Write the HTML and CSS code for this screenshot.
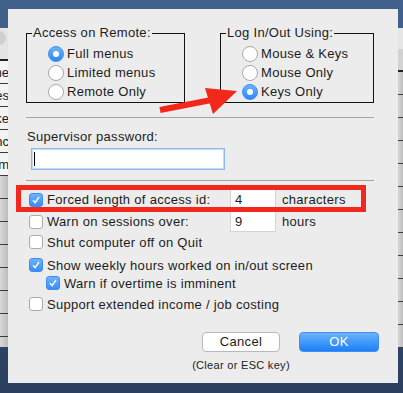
FILE: index.html
```html
<!DOCTYPE html>
<html lang="en">
<head>
  <meta charset="UTF-8" />
  <title>Preferences</title>
  <link rel="stylesheet" href="styles.css">
</head>
<body>
  <div class="desk">
    <div class="backwin left">
      <div class="bw-head"><span class="bw-btn"></span></div>
      <div class="bw-rows">
        <div class="bw-row txt"><span>Name</span></div>
        <div class="bw-row txt"><span>Jones</span></div>
        <div class="bw-row txt"><span>Mike</span></div>
        <div class="bw-row txt"><span>Lync</span></div>
        <div class="bw-row txt"><span>Kim</span></div>
        <div class="bw-row"></div>
        <div class="bw-row"></div>
        <div class="bw-row"></div>
        <div class="bw-row"></div>
        <div class="bw-row"></div>
        <div class="bw-row"></div>
        <div class="bw-row"></div>
        <div class="bw-row"></div>
      </div>
    </div>

    <div class="dialog">
      <div class="groups">
        <fieldset class="group access">
          <legend>Access on Remote:</legend>
          <div class="opt"><span class="radio on"></span>Full menus</div>
          <div class="opt"><span class="radio"></span>Limited menus</div>
          <div class="opt"><span class="radio"></span>Remote Only</div>
        </fieldset>
        <fieldset class="group login">
          <legend>Log In/Out Using:</legend>
          <div class="opt"><span class="radio"></span>Mouse &amp; Keys</div>
          <div class="opt"><span class="radio"></span>Mouse Only</div>
          <div class="opt"><span class="radio on"></span>Keys Only</div>
        </fieldset>
      </div>

      <hr class="sep first">

      <div class="pw-label">Supervisor password:</div>
      <div class="pw-field"><span class="caret"></span></div>

      <hr class="sep second">

      <div class="row r1">
        <span class="check on"><svg viewBox="0 0 14 14"><path d="M3.5 7.2 L6 10 L10.5 3.5" /></svg></span>
        <span class="lbl">Forced length of access id:</span>
        <span class="num">4</span>
        <span class="unit">characters</span>
      </div>
      <div class="row r2">
        <span class="check"></span>
        <span class="lbl">Warn on sessions over:</span>
        <span class="num">9</span>
        <span class="unit">hours</span>
      </div>
      <div class="row r3">
        <span class="check"></span>
        <span>Shut computer off on Quit</span>
      </div>
      <div class="row r4">
        <span class="check on"><svg viewBox="0 0 14 14"><path d="M3.5 7.2 L6 10 L10.5 3.5" /></svg></span>
        <span>Show weekly hours worked on in/out screen</span>
      </div>
      <div class="row r5 sub">
        <span class="check on"><svg viewBox="0 0 14 14"><path d="M3.5 7.2 L6 10 L10.5 3.5" /></svg></span>
        <span>Warn if overtime is imminent</span>
      </div>
      <div class="row r6">
        <span class="check"></span>
        <span>Support extended income / job costing</span>
      </div>

      <div class="buttons">
        <div class="btn-col">
          <div class="btn cancel">Cancel</div>
          <div class="hint">(Clear or ESC key)</div>
        </div>
        <div class="btn ok">OK</div>
      </div>
    </div>

    <div class="backwin right">
      <div class="bw-head"></div>
      <div class="bw-rows">
        <div class="bw-row"></div>
        <div class="bw-row"></div>
        <div class="bw-row"></div>
        <div class="bw-row"></div>
        <div class="bw-row"></div>
        <div class="bw-row"></div>
        <div class="bw-row"></div>
        <div class="bw-row"></div>
        <div class="bw-row"></div>
        <div class="bw-row"></div>
        <div class="bw-row"></div>
        <div class="bw-row"></div>
      </div>
    </div>
  </div>

  <!-- annotations drawn over the screenshot -->
  <svg class="marks" viewBox="0 0 403 393">
    <line x1="160" y1="110" x2="214" y2="99.5" />
    <polygon points="205,88 237,91 213,114" />
    <rect x="18.5" y="187.5" width="345" height="22" />
  </svg>
</body>
</html>
```

FILE: styles.css
```css
* { box-sizing: border-box; }
body {
  margin: 0;
  height: 393px;
  overflow: hidden;
  font-family: "Liberation Sans", Arial, sans-serif;
  font-size: 13px;
  letter-spacing: 0.3px;
  color: #1c1c1c;
  background: linear-gradient(180deg, #41618c 0%, #37547e 55%, #2b3f5e 100%);
  position: relative;
}
.desk {
  display: flex;
  align-items: flex-start;
  padding-top: 9px;
}

/* windows peeking out behind the sheet */
.backwin {
  margin-top: 19px;
  background: #c9c9c9;
  overflow: hidden;
}
.backwin.left { width: 8px; height: 319px; }
.backwin.right { width: 5px; height: 320px; }
.backwin .bw-head {
  background: #e4e4e4;
  border-bottom: 2px solid #222;
}
.backwin.left .bw-head { height: 33px; padding: 3px 0 0 0; }
.backwin.right .bw-head {
  height: 44px;
  background: linear-gradient(180deg, #e6e6e6 0, #e6e6e6 21px, #d2d2d2 21px);
}
.bw-btn {
  display: block;
  width: 14px;
  height: 14px;
  margin-left: -8px;
  border-radius: 50%;
  background: #d0d0d0;
}
.bw-row {
  height: 23px;
  border-bottom: 1px solid #3a3a3a;
  background: linear-gradient(90deg, #d8d8d8, #bdbdbd);
}
.bw-row.txt {
  display: flex;
  justify-content: flex-end;
  align-items: center;
  background: #f4f4f4;
  white-space: nowrap;
  letter-spacing: 0;
}
.bw-row.txt span { margin-right: -1px; }

/* the sheet */
.dialog {
  width: 390px;
  height: 374px;
  background: #ececec;
  padding: 16px 24px 0 18px;
}
.groups {
  display: flex;
  gap: 35px;
}
.group {
  margin: 0;
  border: 1px solid #111;
  padding: 3px 0 1px 5px;
}
.group.access { width: 159px; }
.group.login { width: 154px; }
.group legend {
  padding: 0 1px;
  line-height: 16px;
}
.opt {
  display: flex;
  align-items: center;
  height: 19px;
  margin-left: 16px;
  gap: 3px;
}
.radio {
  width: 16px;
  height: 16px;
  border-radius: 50%;
  background: #fff;
  border: 1px solid #a8a8a8;
  flex: none;
  display: flex;
  align-items: center;
  justify-content: center;
}
.radio.on {
  border-color: #3d8ef3;
  background: linear-gradient(180deg, #6db4fb, #2f86f6);
}
.radio.on::after {
  content: "";
  width: 6px;
  height: 6px;
  border-radius: 50%;
  background: #fff;
}

.sep {
  margin: 0;
  border: 0;
  height: 1px;
  background: #a4a4a4;
}
.sep.first { margin-top: 14px; }
.sep.second { margin-top: 10px; }

.pw-label {
  margin-top: 11px;
  padding-left: 1px;
  line-height: 16px;
}
.pw-field {
  margin: 3px 0 0 5px;
  width: 194px;
  height: 22px;
  background: #fff;
  border: 1px solid #8fb8ec;
  box-shadow: inset 0 0 0 1px #c5dbf5;
  padding: 3px 0 0 2px;
}
.caret {
  display: block;
  width: 1px;
  height: 14px;
  background: #000;
}

.row {
  display: flex;
  align-items: center;
  height: 18px;
  padding-left: 3px;
  white-space: nowrap;
}
.row.sub { padding-left: 20px; }
.r1 { height: 21px; margin-top: 8px; }
.r2 { height: 21px; margin-top: 1px; }
.r3 { margin-top: 1px; }
.r4 { margin-top: 5px; }
.r5 { margin-top: 0; }
.r6 { margin-top: 3px; }
.check {
  width: 14px;
  height: 14px;
  flex: none;
  margin-right: 4px;
  border-radius: 3px;
  background: #fff;
  border: 1px solid #ababab;
}
.check.on {
  border-color: #3f8cf1;
  background: linear-gradient(180deg, #6eb2fb, #3a8df5);
}
.check svg {
  display: block;
  width: 12px;
  height: 12px;
}
.check path {
  fill: none;
  stroke: #fff;
  stroke-width: 1.6;
}
.lbl { width: 183px; }
.num {
  width: 46px;
  height: 21px;
  background: #fff;
  border: 1px solid #d4d4d4;
  padding: 1px 0 0 4px;
  line-height: 18px;
}
.unit { margin-left: 6px; }

.buttons {
  display: flex;
  justify-content: flex-end;
  gap: 19px;
  margin: 19px -5px 0 0;
}
.btn-col {
  width: 78px;
  display: flex;
  flex-direction: column;
  align-items: center;
}
.btn {
  height: 20px;
  border-radius: 4px;
  text-align: center;
  line-height: 18px;
}
.btn.cancel {
  width: 78px;
  background: #fff;
  border: 1px solid #b9b9b9;
}
.btn.ok {
  width: 80px;
  color: #fff;
  border: 1px solid #3f8ef5;
  background: linear-gradient(180deg, #6cb3fb, #1c80f8);
}
.hint {
  width: max-content;
  margin-top: 7px;
  font-size: 11px;
  line-height: 13px;
}

.marks {
  position: absolute;
  top: 0;
  left: 0;
  width: 403px;
  height: 393px;
  pointer-events: none;
}
.marks line { stroke: #f2281c; stroke-width: 6; }
.marks polygon { fill: #f2281c; }
.marks rect { fill: none; stroke: #f2281c; stroke-width: 5; }
```
